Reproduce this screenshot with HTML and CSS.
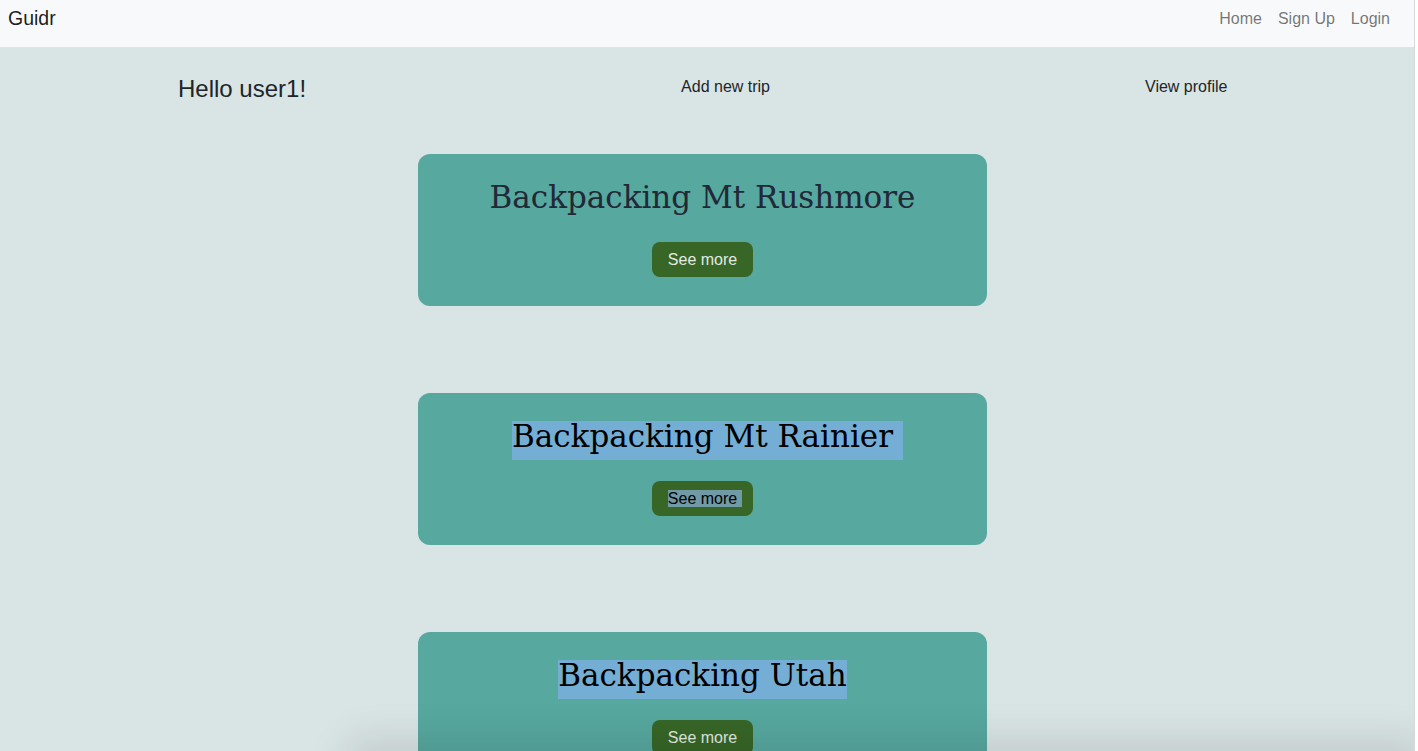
FILE: index.html
```html
<!DOCTYPE html>
<html lang="en">
<head>
<meta charset="utf-8">
<title>Guidr</title>
<link rel="stylesheet" href="styles.css">
</head>
<body>
<div class="page">
  <nav class="navbar">
    <a class="brand" href="#">Guidr</a>
    <div class="nav-links">
      <a href="#">Home</a>
      <a href="#">Sign Up</a>
      <a href="#">Login</a>
    </div>
  </nav>
  <header class="welcome">
    <h2 class="hello">Hello user1!</h2>
    <a class="action" href="#">Add new trip</a>
    <a class="action" href="#">View profile</a>
  </header>
  <main class="trips">
    <section class="trip-card">
      <h3 class="trip-title"><span class="tt">Backpacking Mt Rushmore</span></h3>
      <button class="see-more"><span class="bt">See more</span></button>
    </section>
    <section class="trip-card">
      <h3 class="trip-title"><span class="tt sel trail">Backpacking Mt Rainier</span></h3>
      <button class="see-more"><span class="bt sel-btn">See more</span></button>
    </section>
    <section class="trip-card">
      <h3 class="trip-title"><span class="tt sel">Backpacking Utah</span></h3>
      <button class="see-more"><span class="bt">See more</span></button>
    </section>
  </main>
  <div class="bottom-shade"></div>
</div>
</body>
</html>
```
FILE: styles.css
```css
html, body {
  margin: 0;
  padding: 0;
  background: #ffffff;
  overflow: hidden;
}
body {
  font-family: "Liberation Sans", Arial, sans-serif;
  color: #212529;
}
a { text-decoration: none; }

.page {
  height: 751px;
  margin-right: 3px;
  border-right: 1px solid #d6dadb;
  background: #d9e4e5;
  overflow: hidden;
  position: relative;
}

.navbar {
  height: 47px;
  box-sizing: border-box;
  background: #f8f9fa;
  display: flex;
  align-items: flex-start;
  justify-content: space-between;
  padding: 0 16px 0 8px;
}
.brand {
  font-size: 19.5px;
  line-height: 30px;
  padding-top: 3px;
  color: rgba(0, 0, 0, 0.9);
}
.nav-links {
  display: flex;
  padding-top: 7px;
}
.nav-links a {
  font-size: 16px;
  line-height: 24px;
  padding: 0 8px;
  color: rgba(0, 0, 0, 0.55);
}

.welcome {
  display: flex;
  align-items: flex-start;
  gap: 375px;
  padding-left: 178px;
  margin-top: 28px;
}
.hello {
  margin: 0;
  font-size: 24px;
  font-weight: 400;
  line-height: 28.8px;
}
.action {
  font-size: 16px;
  line-height: 24px;
  color: #212529;
}

.trips {
  display: flex;
  flex-direction: column;
  align-items: center;
  gap: 87px;
  margin-top: 50px;
  padding-right: 9px;
}
.trip-card {
  width: 569px;
  height: 152px;
  box-sizing: border-box;
  background: #57a89f;
  border-radius: 12px;
  padding-top: 28px;
  display: flex;
  flex-direction: column;
  align-items: center;
}
.trip-title {
  margin: 0 0 21px;
  height: 39px;
  display: flex;
  justify-content: center;
  font-family: "DejaVu Serif", "Liberation Serif", serif;
  font-weight: 400;
  font-size: 31px;
  color: #212936;
  white-space: nowrap;
}
.tt {
  display: block;
  line-height: 31px;
  height: 31px;
  padding-bottom: 8px;
}
.tt.sel {
  background: #74aed5;
  color: #000000;
}
.tt.trail {
  padding-right: 10px;
  margin-right: -10px;
}

.see-more {
  height: 35px;
  padding: 2px 16px 0;
  border: none;
  border-radius: 8px;
  background: #376627;
  color: #e3eae1;
  font-family: "Liberation Sans", Arial, sans-serif;
  font-size: 16px;
  line-height: 18px;
}
.bt.sel-btn {
  background: #6f9aa6;
  color: #000000;
  padding-right: 5px;
  margin-right: -5px;
}

.bottom-shade {
  position: absolute;
  left: 360px;
  right: 0;
  bottom: -30px;
  height: 30px;
  box-shadow: 0 0 40px 12px rgba(0, 0, 0, 0.11);
  pointer-events: none;
}
```
